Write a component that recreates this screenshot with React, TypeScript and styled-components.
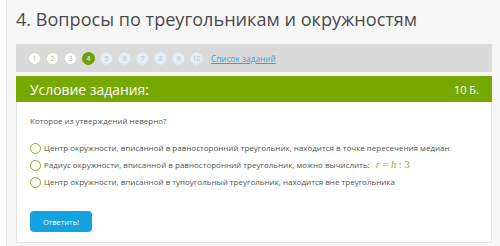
import React from "react";
import styled, { createGlobalStyle } from "styled-components";

const Global = createGlobalStyle`
  html, body { margin: 0; padding: 0; background: #ffffff; }
  body { font-family: "Open Sans", "Noto Sans", sans-serif; }
`;

const Page = styled.div`
  margin-left: 6px;
  width: 494px;
  height: 246px;
  box-sizing: border-box;
  border-left: 1px solid #e2e2e2;
  background: #f7f7f7;
  padding: 7px 8px 0 9px;
  overflow: hidden;
`;

const Title = styled.h1`
  margin: 0 0 12px 0;
  font-size: 18.1px;
  line-height: 25px;
  font-weight: 400;
  color: #4a4a4a;
  white-space: nowrap;
`;

const PagerBar = styled.div`
  height: 28px;
  background: #dadada;
  display: flex;
  align-items: center;
  gap: 5px;
  padding-left: 12px;
`;

const Dot = styled.span<{ $state: "done" | "current" | "todo" }>`
  width: 13px;
  height: 13px;
  border-radius: 50%;
  box-sizing: border-box;
  display: flex;
  align-items: center;
  justify-content: center;
  font-size: 7px;
  line-height: 1;
  background: ${(p) =>
    p.$state === "current" ? "#6f9f0a" : p.$state === "done" ? "#ffffff" : "#e6edf4"};
  color: ${(p) =>
    p.$state === "current" ? "#ffffff" : p.$state === "done" ? "#a3b096" : "#b4c2d6"};
  border: 1px solid
    ${(p) => (p.$state === "current" ? "#6f9f0a" : p.$state === "done" ? "#d2dacb" : "#e0e6ee")};
`;

const ListLink = styled.a`
  margin-left: 3px;
  font-size: 8.3px;
  color: #3d9fd6;
  text-decoration: underline;
`;

const Header = styled.div`
  margin-top: 4px;
  height: 26px;
  background: #76a800;
  display: flex;
  align-items: center;
  justify-content: space-between;
  padding: 0 13px 0 14px;
  color: #ffffff;
`;

const HeaderTitle = styled.span`
  font-size: 13.9px;
`;

const Points = styled.span`
  font-size: 11px;
`;

const Body = styled.div`
  background: #ffffff;
  border: 1px solid #e4e4e4;
  border-top: none;
  height: 141px;
  box-sizing: border-box;
  padding: 13px 14px 0 13px;
`;

const Question = styled.p`
  margin: 0 0 15px 0;
  font-size: 8px;
  line-height: 12px;
  color: #555;
`;

const Options = styled.div`
  display: flex;
  flex-direction: column;
  gap: 5px;
`;

const Option = styled.label`
  display: flex;
  align-items: center;
  gap: 3px;
  font-size: 8px;
  line-height: 12px;
  color: #555;
  white-space: nowrap;
`;

const Radio = styled.span`
  width: 11px;
  height: 11px;
  border-radius: 50%;
  box-sizing: border-box;
  border: 1.5px solid #8cb21a;
  background: #fff;
  flex: none;
`;

const Math = styled.span`
  font-family: "Liberation Serif", "DejaVu Serif", serif;
  font-size: 10.5px;
  color: #8fa83a;
  margin-left: 3px;
`;

const MathVar = styled.i``;

const Button = styled.button`
  margin-top: 23px;
  width: 62px;
  height: 21px;
  border: none;
  border-radius: 4px;
  background: #12a3e0;
  color: #ffffff;
  font-family: "Open Sans", sans-serif;
  font-size: 7.5px;
  padding: 0;
`;

const dots = [1, 2, 3, 4, 5, 6, 7, 8, 9, 10];

export default function App() {
  return (
    <>
      <Global />
      <Page>
        <Title>4. Вопросы по треугольникам и окружностям</Title>
        <PagerBar>
          {dots.map((n) => (
            <Dot key={n} $state={n < 4 ? "done" : n === 4 ? "current" : "todo"}>
              {n}
            </Dot>
          ))}
          <ListLink>Список заданий</ListLink>
        </PagerBar>
        <Header>
          <HeaderTitle>Условие задания:</HeaderTitle>
          <Points>10 Б.</Points>
        </Header>
        <Body>
          <Question>Которое из утверждений неверно?</Question>
          <Options>
            <Option>
              <Radio />
              Центр окружности, вписанной в равносторонний треугольник, находится в точке пересечения медиан
            </Option>
            <Option>
              <Radio />
              Радиус окружности, вписанной в равносторонний треугольник, можно вычислить:
              <Math>
                <MathVar>r</MathVar> = <MathVar>h</MathVar> : 3
              </Math>
            </Option>
            <Option>
              <Radio />
              Центр окружности, вписанной в тупоугольный треугольник, находится вне треугольника
            </Option>
          </Options>
          <Button>Ответить!</Button>
        </Body>
      </Page>
    </>
  );
}
